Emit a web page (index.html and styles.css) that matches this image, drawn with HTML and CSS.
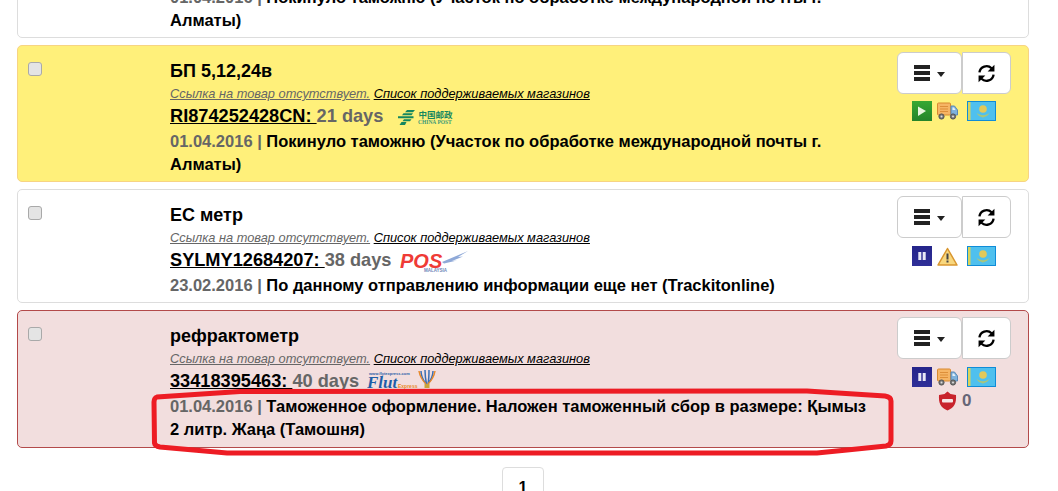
FILE: index.html
```html
<!DOCTYPE html>
<html lang="ru">
<head>
    <meta charset="UTF-8">
    <meta name="viewport" content="width=device-width, initial-scale=1.0">
    <title>Трекинг посылок</title>
    <link rel="stylesheet" href="styles.css">
</head>
<body>
    <svg class="sprites" aria-hidden="true">
        <symbol id="i-truck" viewBox="0 0 21 19">
            <rect x="0.5" y="1" width="13" height="12" rx="1" fill="#f6b565" stroke="#d98a30"/>
            <path d="M3 4.500h8M3 7h8M3 9.500h8" stroke="#dd8f3a" stroke-width="1"/>
            <path d="M14 4h3.500l3 4v5H14z" fill="#7fb2dc" stroke="#5a88b5"/>
            <path d="M15.500 5.500h1.500l1.600 2.500h-3.100z" fill="#e4f0fa"/>
            <circle cx="4.500" cy="14.500" r="2.600" fill="#777" stroke="#555"/>
            <circle cx="16" cy="14.500" r="2.600" fill="#777" stroke="#555"/>
            <circle cx="4.500" cy="14.500" r="1" fill="#ddd"/>
            <circle cx="16" cy="14.500" r="1" fill="#ddd"/>
        </symbol>
        <symbol id="i-flag" viewBox="0 0 29 20">
            <rect x="0.5" y="0.5" width="28" height="19" fill="#4fc0ee" stroke="#0f8cd8"/>
            <rect x="1" y="1" width="2.500" height="18" fill="#d9d35a"/>
            <circle cx="16" cy="8" r="3.800" fill="#e2c95a"/>
            <path d="M9.500 11.500c3 3.500 10 3.500 13 0-1.500 3.800-4 4-6.500 5-2.500-1-5-1.200-6.500-5z" fill="#a9c67c"/>
        </symbol>
        <symbol id="i-refresh" viewBox="0 0 18 18">
            <path d="M2.300 8A6.800 6.800 0 0 1 13.800 4" fill="none" stroke="#000" stroke-width="2.200"/>
            <path d="M16.500 0.800v6.400h-6.400z" fill="#000"/>
            <path d="M15.700 10A6.800 6.800 0 0 1 4.200 14" fill="none" stroke="#000" stroke-width="2.200"/>
            <path d="M1.500 17.200v-6.400h6.400z" fill="#000"/>
        </symbol>
    </svg>

    <main class="tracks">
        <section class="track">
            <div class="track-check"><span class="check"></span></div>
            <div class="track-main">
                <h4 class="track-name">БП 5,12,24в</h4>
                <p class="track-note"><a class="note-missing" href="#">Ссылка на товар отсутствует.</a> <a class="note-shops" href="#">Список поддерживаемых магазинов</a></p>
                <p class="track-code"><a href="#">RI874252428CN: </a><span class="muted">21 days</span></p>
                <p class="track-status"><span class="muted">01.04.2016 |</span> Покинуло таможню (Участок по обработке международной почты г. Алматы)</p>
            </div>
        </section>

        <section class="track track-yellow">
            <div class="track-check"><span class="check"></span></div>
            <div class="track-main">
                <h4 class="track-name">БП 5,12,24в</h4>
                <p class="track-note"><a class="note-missing" href="#">Ссылка на товар отсутствует.</a> <a class="note-shops" href="#">Список поддерживаемых магазинов</a></p>
                <p class="track-code">
                    <a href="#">RI874252428CN: </a><span class="muted">21 days</span>
                    <svg class="logo logo-china" viewBox="0 0 56 18">
                        <path d="M9 3h8l-2 2.200H7zM5.500 6.300h9.500l-1.500 2H4zM0 9.300h15.500v2H0zM6 12.300h7.500l-1.500 2H4.500zM3.500 15h5l-1.500 3H1.500z" fill="#15875f"/>
                        <text x="20.500" y="10.500" class="logo-cn">中国邮政</text>
                        <text x="20" y="17" class="logo-en">CHINA POST</text>
                    </svg>
                </p>
                <p class="track-status"><span class="muted">01.04.2016 |</span> Покинуло таможню (Участок по обработке международной почты г. Алматы)</p>
            </div>
            <div class="track-side">
                <div class="btn-row">
                    <button class="btn btn-menu"><span class="bars"><i></i><i></i><i></i></span><span class="caret"></span></button>
                    <button class="btn btn-refresh"><svg class="refresh"><use href="#i-refresh"/></svg></button>
                </div>
                <div class="icon-row">
                    <span class="state state-play"><svg viewBox="0 0 20 20"><path d="M6 5.500l8 4.500-8 5z" fill="#e8f5e0"/></svg></span>
                    <svg class="truck"><use href="#i-truck"/></svg>
                    <svg class="flag"><use href="#i-flag"/></svg>
                </div>
            </div>
        </section>

        <section class="track">
            <div class="track-check"><span class="check"></span></div>
            <div class="track-main">
                <h4 class="track-name">ЕС метр</h4>
                <p class="track-note"><a class="note-missing" href="#">Ссылка на товар отсутствует.</a> <a class="note-shops" href="#">Список поддерживаемых магазинов</a></p>
                <p class="track-code">
                    <a href="#">SYLMY12684207: </a><span class="muted">38 days</span>
                    <svg class="logo logo-pos" viewBox="0 0 68 24">
                        <path d="M42 14L68 3 58 9l5-.5-11 4.500 5-.5-13 3z" fill="#8fa9d8"/>
                        <text x="0" y="20" class="logo-pos-text">POS</text>
                        <text x="24" y="23.500" class="logo-pos-sub">MALAYSIA</text>
                    </svg>
                </p>
                <p class="track-status"><span class="muted">23.02.2016 |</span> По данному отправлению информации еще нет (Trackitonline)</p>
            </div>
            <div class="track-side">
                <div class="btn-row">
                    <button class="btn btn-menu"><span class="bars"><i></i><i></i><i></i></span><span class="caret"></span></button>
                    <button class="btn btn-refresh"><svg class="refresh"><use href="#i-refresh"/></svg></button>
                </div>
                <div class="icon-row">
                    <span class="state state-pause"><svg viewBox="0 0 20 20"><path d="M6.300 6h3v8h-3zM10.700 6h3v8h-3z" fill="#e8e8f5"/></svg></span>
                    <svg class="truck" viewBox="0 0 21 19">
                        <path d="M10.500 1.500L20 18H1z" fill="#f8d77e" stroke="#d9962f" stroke-width="1.500" stroke-linejoin="round"/>
                        <path d="M9.500 6.500h2v6h-2zM9.500 13.500h2v2h-2z" fill="#444"/>
                    </svg>
                    <svg class="flag"><use href="#i-flag"/></svg>
                </div>
            </div>
        </section>

        <section class="track track-red">
            <div class="track-check"><span class="check"></span></div>
            <div class="track-main">
                <h4 class="track-name">рефрактометр</h4>
                <p class="track-note"><a class="note-missing" href="#">Ссылка на товар отсутствует.</a> <a class="note-shops" href="#">Список поддерживаемых магазинов</a></p>
                <p class="track-code">
                    <a href="#">33418395463: </a><span class="muted">40 days</span>
                    <svg class="logo logo-flut" viewBox="0 0 70 26">
                        <text x="2" y="6.500" class="logo-flut-url">www.flytexpress.com</text>
                        <text x="0" y="20" class="logo-flut-text">Flut</text>
                        <text x="31" y="20" class="logo-flut-orange">Express</text>
                        <path d="M54 3c0 5 2 9 5 13M58 2c0 5 .5 9 1.500 14M62 2c0 5 0 9-1 14M66 3c0 5-2 9-5 13" fill="none" stroke="#3a6fb5" stroke-width="1.500"/>
                        <path d="M52 3c1 6 4 10 7 13M68 3c-1 6-4 10-7 13" fill="none" stroke="#e8892b" stroke-width="1.500"/>
                        <rect x="57.500" y="16" width="5" height="4" fill="#c9a33a"/>
                    </svg>
                </p>
                <p class="track-status"><span class="muted">01.04.2016 |</span> Таможенное оформление. Наложен таможенный сбор в размере: Қымыз 2 литр. Жаңа (Тамошня)</p>
            </div>
            <div class="track-side">
                <div class="btn-row">
                    <button class="btn btn-menu"><span class="bars"><i></i><i></i><i></i></span><span class="caret"></span></button>
                    <button class="btn btn-refresh"><svg class="refresh"><use href="#i-refresh"/></svg></button>
                </div>
                <div class="icon-row">
                    <span class="state state-pause"><svg viewBox="0 0 20 20"><path d="M6.300 6h3v8h-3zM10.700 6h3v8h-3z" fill="#e8e8f5"/></svg></span>
                    <svg class="truck"><use href="#i-truck"/></svg>
                    <svg class="flag"><use href="#i-flag"/></svg>
                </div>
                <div class="customs">
                    <svg class="shield" viewBox="0 0 19 20">
                        <path d="M9.500 0.500l3 2.500 5.500 1c.5 8-1.500 12.500-8.500 15.500C2.500 16.500 .5 12 1 4l5.500-1z" fill="#c8232c"/>
                        <rect x="4" y="8" width="11" height="3.500" rx="1" fill="#f5e6e6"/>
                    </svg>
                    <span class="customs-count">0</span>
                </div>
            </div>
        </section>

        <!-- обводка поверх последней карточки -->
        <svg class="scribble" viewBox="0 0 1058 491">
            <path d="M240 391.500L157 397Q154 398 154 402L154.500 443Q155 446 160 447L227 453L817 453L847 450L886 446Q891 445 891 441L891 401Q891 397 885 396L807 391L240 391.500z"/>
        </svg>
    </main>

    <nav class="pager">
        <a class="page" href="#">1</a>
    </nav>
</body>
</html>
```

FILE: styles.css
```css
html, body {
    height: 491px;
    overflow: hidden;
}
body {
    margin: 0;
    background: #fff;
    color: #000;
    font-family: "Liberation Sans", Arial, sans-serif;
    font-size: 16px;
    line-height: 23px;
}
.sprites {
    display: none;
}
.tracks {
    display: flex;
    flex-direction: column;
    gap: 7px;
    margin: -99px 29px 0 17px;
}
.track {
    display: grid;
    grid-template-columns: 152px 1fr 131px;
    height: 137px;
    box-sizing: border-box;
    border: 1px solid #ddd;
    border-radius: 5px;
    background: #fff;
}
.track:nth-child(3) {
    height: 114px;
}
.track-yellow {
    background: #fff07a;
    border-color: #f7d483;
}
.track-red {
    height: 138px;
    background: #f2dede;
    border-color: #b34a4a;
}
.track-check {
    padding: 16px 0 0 10px;
}
.check {
    display: block;
    width: 12px;
    height: 12px;
    border: 1px solid #a9a9a9;
    border-radius: 3px;
    background: #e4e4e4;
}
.track-main {
    padding: 12px 20px 0 0;
    min-width: 0;
}
.track-name {
    margin: 0;
    font-size: 18px;
    line-height: 27px;
    font-weight: bold;
}
.track-note {
    margin: 0;
    font-size: 12.800px;
    line-height: 18px;
    font-style: italic;
}
.note-missing {
    color: #666;
}
.note-shops {
    color: #000;
}
.track-code {
    display: flex;
    align-items: center;
    margin: 0;
    font-size: 18.200px;
    line-height: 26px;
    font-weight: bold;
    white-space: pre;
}
.track-code a {
    color: #000;
}
.muted {
    color: #666;
}
.track-status {
    margin: 1px 0 0;
    font-size: 16.500px;
    font-weight: bold;
    line-height: 23px;
}
.logo {
    display: block;
}
.logo-china {
    width: 56px;
    height: 18px;
    margin-left: 15px;
}
.logo-cn {
    font-family: "Noto Sans CJK SC", sans-serif;
    font-size: 8.500px;
    font-weight: bold;
    fill: #15875f;
}
.logo-en {
    font-family: "Liberation Serif", serif;
    font-size: 5.500px;
    fill: #3d9a78;
}
.logo-pos {
    width: 68px;
    height: 24px;
    margin-left: 9px;
}
.logo-pos-text {
    font-size: 20px;
    font-weight: bold;
    font-style: italic;
    fill: #ef3b36;
}
.logo-pos-sub {
    font-size: 4.500px;
    font-weight: bold;
    fill: #6f86b8;
}
.logo-flut {
    width: 70px;
    height: 26px;
    margin-left: 8px;
}
.logo-flut-url {
    font-size: 4px;
    font-weight: bold;
    fill: #2a5fa8;
}
.logo-flut-text {
    font-family: "Liberation Serif", serif;
    font-size: 17px;
    font-weight: bold;
    font-style: italic;
    fill: #1f5ea8;
}
.logo-flut-orange {
    font-size: 5px;
    font-weight: bold;
    fill: #e8892b;
}
.track-side {
    padding-top: 6px;
}
.btn-row {
    display: flex;
    width: 114px;
}
.btn {
    display: flex;
    align-items: center;
    justify-content: center;
    height: 42px;
    padding: 0;
    background: #fff;
    border: 1px solid #ccc;
    cursor: pointer;
}
.btn-menu {
    width: 65px;
    gap: 7px;
    border-radius: 6px;
}
.btn-refresh {
    width: 49px;
    border-radius: 0 6px 6px 0;
}
.bars {
    display: flex;
    flex-direction: column;
    gap: 2px;
    width: 16px;
}
.bars i {
    display: block;
    height: 4px;
    background: #222;
}
.caret {
    width: 0;
    height: 0;
    margin-top: 2px;
    border-top: 5px solid #222;
    border-left: 4.500px solid transparent;
    border-right: 4.500px solid transparent;
}
.refresh {
    width: 19px;
    height: 19px;
}
.icon-row {
    display: flex;
    align-items: center;
    gap: 5px;
    margin: 8px 0 0 15px;
}
.track-yellow .icon-row {
    margin-top: 7px;
}
.state {
    display: block;
    width: 20px;
    height: 20px;
}
.state svg {
    display: block;
    width: 20px;
    height: 20px;
}
.state-play {
    background: linear-gradient(#36a832, #24842a);
}
.state-pause {
    background: linear-gradient(#25258a, #2f2f98);
}
.truck {
    width: 21px;
    height: 19px;
}
.flag {
    width: 29px;
    height: 20px;
    margin-left: 4px;
}
.customs {
    display: flex;
    align-items: center;
    gap: 5px;
    margin: 4px 0 0 41px;
}
.shield {
    width: 19px;
    height: 20px;
}
.customs-count {
    color: #667;
    font-weight: bold;
    font-size: 17px;
    line-height: 20px;
}
.scribble {
    position: absolute;
    top: 0;
    left: 0;
    width: 1058px;
    height: 491px;
    pointer-events: none;
}
.scribble path {
    fill: none;
    stroke: #ed1c24;
    stroke-width: 5;
}
.pager {
    display: flex;
    justify-content: center;
    margin: 19px 29px 0 17px;
}
.page {
    display: block;
    width: 40px;
    height: 40px;
    border: 1px solid #ddd;
    border-radius: 4px;
    background: #fff;
    color: #000;
    font-weight: bold;
    line-height: 40px;
    text-align: center;
    text-decoration: none;
}
```
